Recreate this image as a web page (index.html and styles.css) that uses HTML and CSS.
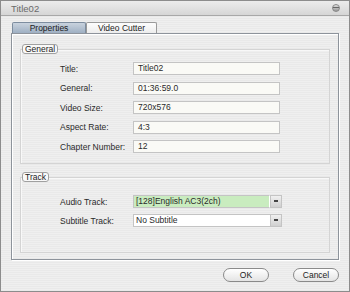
FILE: index.html
```html
<!DOCTYPE html>
<html lang="en">

<head>
    <meta charset="UTF-8">
    <meta name="viewport" content="width=device-width, initial-scale=1.0">
    <title>Title02</title>
    <link rel="stylesheet" href="styles.css">
</head>

<body>
    <div class="window">
        <div class="titlebar">
            <span class="title">Title02</span>
            <span class="close"></span>
        </div>

        <div class="body">
            <div class="tabs">
                <div class="tab active">Properties</div>
                <div class="tab">Video Cutter</div>
            </div>

            <div class="panel">
                <fieldset class="group general">
                    <legend>General</legend>
                    <div class="row"><label>Title:</label><div class="field">Title02</div></div>
                    <div class="row"><label>General:</label><div class="field">01:36:59.0</div></div>
                    <div class="row"><label>Video Size:</label><div class="field">720x576</div></div>
                    <div class="row"><label>Aspect Rate:</label><div class="field">4:3</div></div>
                    <div class="row"><label>Chapter Number:</label><div class="field">12</div></div>
                </fieldset>

                <fieldset class="group track">
                    <legend>Track</legend>
                    <div class="row">
                        <label>Audio Track:</label>
                        <div class="combo green"><span class="value">[128]English AC3(2ch)</span><span class="arrow"></span></div>
                    </div>
                    <div class="row">
                        <label>Subtitle Track:</label>
                        <div class="combo"><span class="value">No Subtitle</span><span class="arrow"></span></div>
                    </div>
                </fieldset>
            </div>

            <div class="buttons">
                <button class="btn">OK</button>
                <button class="btn">Cancel</button>
            </div>
        </div>
    </div>
</body>

</html>
```

FILE: styles.css
```css
body {
    margin: 0;
    font-family: "Liberation Sans", Arial, sans-serif;
    font-size: 8.5px;
    color: #2a2a2a;
}

.window {
    width: 350px;
    height: 292px;
    box-sizing: border-box;
    border: 1px solid #8c8c8c;
    background: repeating-linear-gradient(to bottom, #efefef 0, #efefef 1px, #e9e9e9 1px, #e9e9e9 2px);
}

.titlebar {
    height: 14px;
    border-bottom: 1px solid #a8a8a8;
    background: linear-gradient(#ececec, #d6d6d6);
    display: flex;
    align-items: center;
    justify-content: space-between;
    padding: 0 9px 0 10px;
}

.title {
    color: #6a6a6a;
    font-size: 9.5px;
}

.close {
    width: 6px;
    height: 6px;
    border-radius: 50%;
    border: 1px solid #888;
    background: linear-gradient(#ddd, #999);
    position: relative;
}

.close::after {
    content: '';
    position: absolute;
    left: 0;
    right: 0;
    top: 2px;
    height: 1px;
    background: #666;
}

.body {
    padding: 6px 10px 0 10px;
}

.tabs {
    display: flex;
    padding-left: 1px;
    height: 11px;
    position: relative;
    z-index: 1;
}

.tab {
    height: 11px;
    box-sizing: border-box;
    border: 1px solid #999;
    border-bottom: none;
    border-radius: 2px 2px 0 0;
    background: linear-gradient(#fdfdfd, #ededed);
    line-height: 10px;
    text-align: center;
    color: #222;
}

.tab.active {
    width: 74px;
    background: linear-gradient(#c9d3de, #9fb0c3);
    border-color: #7d8d9f;
}

.tab:nth-child(2) {
    width: 71px;
}

.panel {
    height: 227px;
    box-sizing: border-box;
    border: 1px solid #8d939b;
    box-shadow: 1px 1px 0 #fff, inset 1px 1px 0 #fff;
    padding: 10px 8px 0 8px;
    display: flex;
    flex-direction: column;
    gap: 8px;
}

.group {
    margin: 0;
    border: 1px solid #d4d4d4;
    box-shadow: inset 1px 1px 0 #f8f8f8;
    padding: 0;
}

.group legend {
    margin-left: 1px;
    padding: 0 2px;
    height: 8px;
    line-height: 8px;
    border: 1px solid #a0a0a0;
    border-radius: 3px;
    background: #f9f9f9;
    color: #222;
}

.general {
    height: 110px;
    display: flex;
    flex-direction: column;
    gap: 6.5px;
    padding-top: 8px;
}

.track {
    height: 66px;
    display: flex;
    flex-direction: column;
    gap: 6px;
    padding-top: 13px;
}

.row {
    display: flex;
    align-items: center;
    padding-left: 39px;
}

.row label {
    width: 73px;
}

.field {
    width: 147px;
    height: 13px;
    box-sizing: border-box;
    border: 1px solid #c4c4c4;
    background: #fafaf6;
    padding-left: 4px;
    line-height: 11px;
}

.combo {
    width: 149px;
    height: 13px;
    display: flex;
}

.combo .value {
    flex: 1;
    box-sizing: border-box;
    border: 1px solid #c4c4c4;
    border-right: none;
    background: #fff;
    padding-left: 2px;
    line-height: 11px;
}

.combo.green .value {
    background: #c9ecbf;
    border-right: 1px solid #fff;
}

.combo .arrow {
    width: 12px;
    box-sizing: border-box;
    border: 1px solid #c4c4c4;
    background: linear-gradient(#f0f0f0, #d0d0d0);
    position: relative;
}

.combo .arrow::after {
    content: '';
    position: absolute;
    left: 3px;
    top: 4px;
    width: 4px;
    height: 2px;
    background: #444;
}

.buttons {
    display: flex;
    justify-content: flex-end;
    gap: 24px;
    padding-top: 8px;
}

.btn {
    width: 46px;
    height: 14px;
    padding: 0;
    border: 1px solid #8a8a8a;
    border-radius: 7px;
    background: linear-gradient(#ffffff, #e4e4e4);
    font-family: "Liberation Sans", Arial, sans-serif;
    font-size: 8.5px;
    color: #222;
    line-height: 12px;
}
```
